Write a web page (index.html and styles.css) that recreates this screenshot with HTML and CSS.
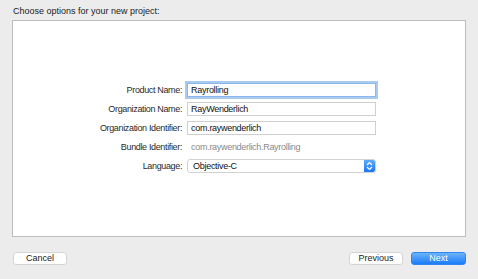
FILE: index.html
```html
<!DOCTYPE html>
<html lang="en">
<head>
    <meta charset="UTF-8">
    <meta name="viewport" content="width=device-width, initial-scale=1.0">
    <title>New Project</title>
    <link rel="stylesheet" href="styles.css">
</head>
<body>
    <div class="sheet">
        <p class="title">Choose options for your new project:</p>
        <div class="panel">
            <div class="form">
                <label class="label">Product Name:</label>
                <div class="field focused">Rayrolling</div>

                <label class="label">Organization Name:</label>
                <div class="field">RayWenderlich</div>

                <label class="label">Organization Identifier:</label>
                <div class="field">com.raywenderlich</div>

                <label class="label">Bundle Identifier:</label>
                <div class="static">com.raywenderlich.Rayrolling</div>

                <label class="label">Language:</label>
                <div class="popup">
                    <span>Objective-C</span>
                    <span class="stepper">
                        <svg width="7" height="10" viewBox="0 0 7 10">
                            <path d="M1 4 L3.5 1.5 L6 4 M1 6 L3.5 8.5 L6 6" fill="none" stroke="#fff" stroke-width="1.2"/>
                        </svg>
                    </span>
                </div>
            </div>
        </div>
        <div class="footer">
            <button class="btn">Cancel</button>
            <div class="nav">
                <button class="btn">Previous</button>
                <button class="btn primary">Next</button>
            </div>
        </div>
    </div>
</body>
</html>
```

FILE: styles.css
```css
body {
    margin: 0;
    background-color: #ececec;
    font-family: "Liberation Sans", Arial, sans-serif;
    font-size: 9px;
    color: #222;
}

.sheet {
    padding: 0 12px 0 12px;
}

.title {
    margin: 0;
    height: 20px;
    line-height: 22px;
    padding-left: 1px;
}

.panel {
    background-color: #fff;
    border: 1px solid #bdbdbd;
    height: 215px;
    display: flex;
    justify-content: center;
    align-items: center;
}

.form {
    display: grid;
    grid-template-columns: auto 189px;
    grid-auto-rows: 14px;
    column-gap: 5px;
    row-gap: 5px;
    margin-right: 2px;
    margin-bottom: 1px;
    letter-spacing: -0.3px;
}

.label {
    text-align: right;
    line-height: 14px;
    letter-spacing: -0.35px;
    color: #2a2a2a;
}

.field {
    border: 1px solid #cfcfcf;
    line-height: 12px;
    padding-left: 3px;
    color: #111;
}

.field.focused {
    border-color: #8fb6e6;
    box-shadow: 0 0 0 2px #a8cbf3;
}

.static {
    line-height: 14px;
    color: #8a8a8a;
    padding-left: 4px;
}

.popup {
    display: flex;
    justify-content: space-between;
    border: 1px solid #d2d2d2;
    border-radius: 3px;
    line-height: 12px;
    padding-left: 5px;
    color: #111;
    overflow: hidden;
}

.stepper {
    width: 11px;
    background: linear-gradient(#5ea9fb, #1a78f7);
    display: flex;
    align-items: center;
    justify-content: center;
}

.footer {
    display: flex;
    justify-content: space-between;
    margin-top: 15px;
    padding-left: 1px;
}

.nav {
    display: flex;
    gap: 8px;
}

.btn {
    font-family: "Liberation Sans", Arial, sans-serif;
    font-size: 9px;
    height: 13px;
    width: 54px;
    padding: 0;
    line-height: 11px;
    background-color: #fff;
    border: 1px solid #d4d4d4;
    border-radius: 3px;
    color: #222;
}

.btn.primary {
    width: 55px;
    border-color: #2f86f2;
    background: linear-gradient(#6cb3fc, #1b7cf7);
    color: #fff;
}
```
